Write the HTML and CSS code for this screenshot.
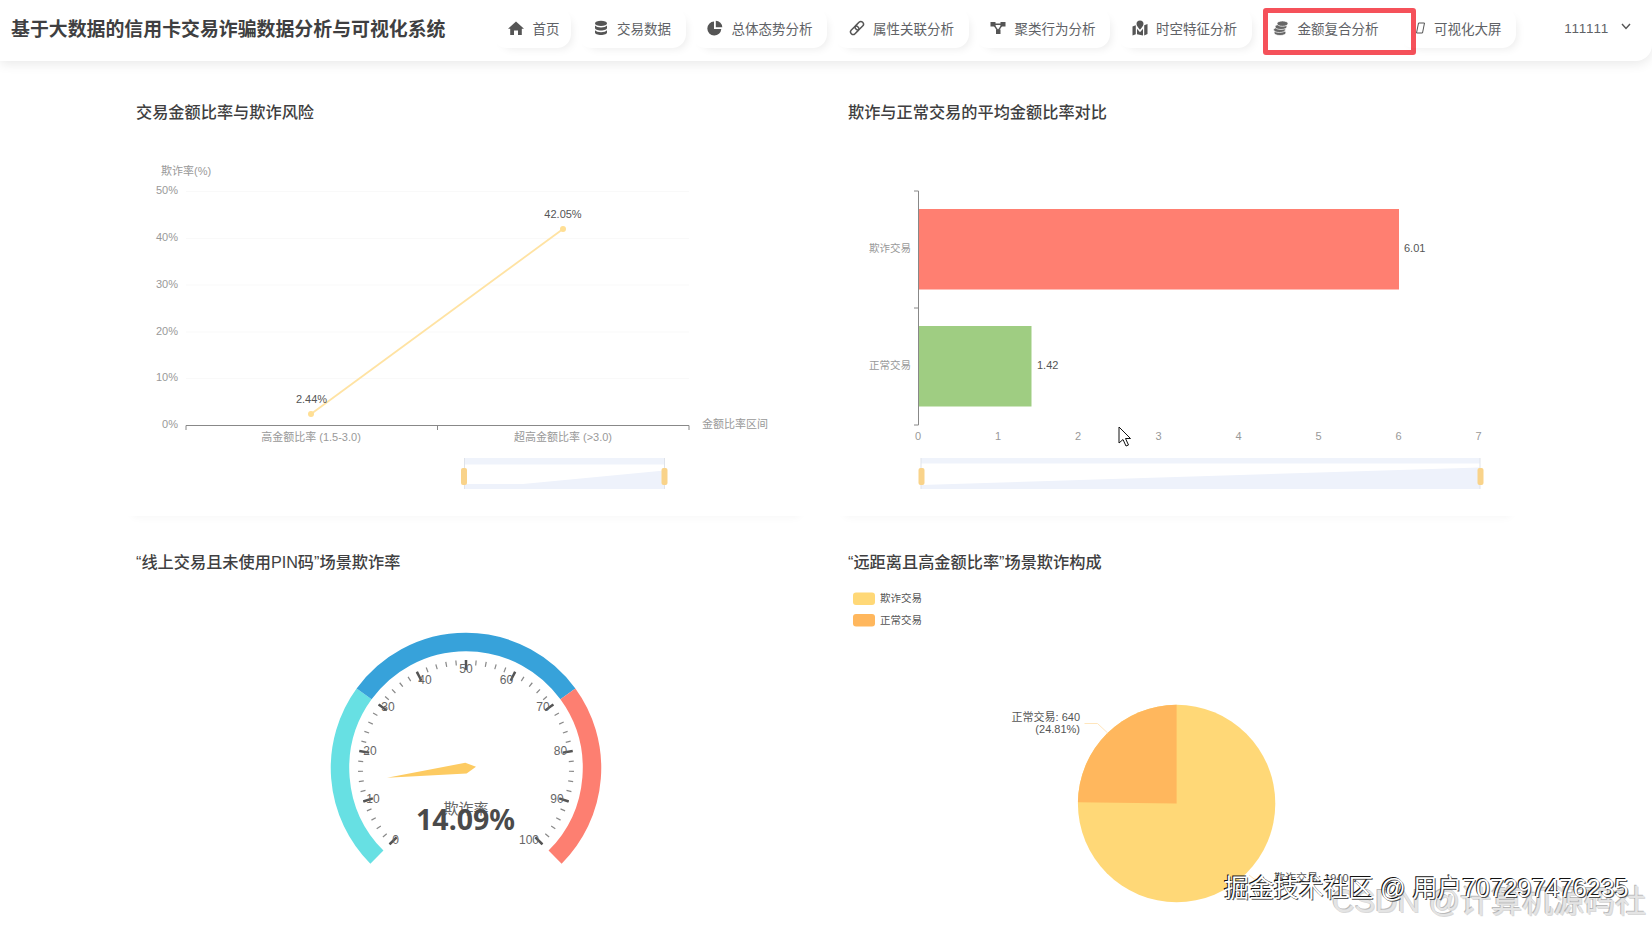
FILE: index.html
```html
<!DOCTYPE html>
<html lang="zh-CN">
<head>
    <meta charset="UTF-8">
    <title>基于大数据的信用卡交易诈骗数据分析与可视化系统</title>
    <link rel="stylesheet" href="styles.css">
</head>
<body>
    <header class="topbar">
        <div class="brand">基于大数据的信用卡交易诈骗数据分析与可视化系统</div>
        <nav class="nav">
            <a class="nav-item nav-item-home">
                <svg class="nav-icon" viewBox="0 0 16 16"><path d="M8 1.5 16 8.7h-2.2V15H10v-4.5H6V15H2.2V8.7H0z"/></svg>
                <span>首页</span>
            </a>
            <a class="nav-item">
                <svg class="nav-icon" viewBox="0 0 16 16"><ellipse cx="8" cy="3.4" rx="6" ry="2.6"/><path d="M2 5.6V8c0 1.4 2.7 2.5 6 2.5s6-1.100 6-2.500V5.600c-1 1.300-3.300 2-6 2s-5-.7-6-2z"/><path d="M2 10.200v2.400c0 1.400 2.700 2.500 6 2.500s6-1.100 6-2.500v-2.400c-1 1.300-3.300 2-6 2s-5-.7-6-2z"/></svg>
                <span>交易数据</span>
            </a>
            <a class="nav-item">
                <svg class="nav-icon" viewBox="0 0 16 16"><path d="M7 1.500A7 7 0 1 0 14.300 9H7z"/><path d="M8.800 .8V7.200H15.300A6.500 6.500 0 0 0 8.800 .8z"/></svg>
                <span>总体态势分析</span>
            </a>
            <a class="nav-item">
                <svg class="nav-icon nav-icon-line" viewBox="0 0 16 16"><g transform="rotate(-45 8 8)"><rect x="0" y="5.400" width="9.500" height="5.200" rx="2.600"/><rect x="6.500" y="5.400" width="9.500" height="5.200" rx="2.600"/></g></svg>
                <span>属性关联分析</span>
            </a>
            <a class="nav-item">
                <svg class="nav-icon" viewBox="0 0 16 16"><rect x=".5" y="2" width="5" height="4.500"/><rect x="10.500" y="2" width="5" height="4.500"/><rect x="6" y="9.500" width="4.500" height="4.500"/><path d="M3 3.500h10v1.500H3zM3.500 5.500l1.200-.8 4 6-1.200.8zM12.500 5.500l-1.200-.8-4 6 1.200.8z"/></svg>
                <span>聚类行为分析</span>
            </a>
            <a class="nav-item">
                <svg class="nav-icon" viewBox="0 0 16 16"><path d="M8 .5A3.500 3.500 0 0 0 4.500 4c0 1.800 2.300 4.400 3.500 5.700C9.200 8.400 11.500 5.800 11.500 4A3.500 3.500 0 0 0 8 .5z"/><path d="M.5 6.500 3.800 5.200V14.200L.5 15.500zM5 8.800l3 3.400 3-3.400v6.700L5 14.200zM12.200 5.200 15.500 4v10l-3.300 1.500z"/></svg>
                <span>时空特征分析</span>
            </a>
            <a class="nav-item nav-item-active">
                <svg class="nav-icon nav-icon-coins" viewBox="0 0 16 16"><ellipse cx="7" cy="12.800" rx="6" ry="2.700"/><ellipse cx="6.500" cy="9.800" rx="6" ry="2.700"/><ellipse cx="8" cy="6.800" rx="6" ry="2.700"/><ellipse cx="9.500" cy="3.600" rx="5.500" ry="2.700"/></svg>
                <span>金额复合分析</span>
                <i class="highlight-box"></i>
            </a>
            <a class="nav-item">
                <svg class="nav-icon nav-icon-line nav-icon-narrow" viewBox="0 0 11 16"><path d="M3.500 3h6l-2 10h-6z"/></svg>
                <span>可视化大屏</span>
            </a>
        </nav>
        <div class="user">
            <span>111111</span>
            <svg class="chevron" viewBox="0 0 10 7"><path d="M1 1l4 4.500L9 1"/></svg>
        </div>
    </header>

    <main class="dashboard">
        <section class="card">
            <h2 class="card-title">交易金额比率与欺诈风险</h2>
            <svg class="chart chart-left" viewBox="126 130 680 375">
                <!-- grid -->
                <path class="grid" d="M186 191.500H689M186 238.500H689M186 285H689M186 332H689M186 378.500H689"/>
                <text class="axis-label" x="161" y="171">欺诈率(%)</text>
                <text class="axis-label end" x="178" y="190">50%</text>
                <text class="axis-label end" x="178" y="236.500">40%</text>
                <text class="axis-label end" x="178" y="283.500">30%</text>
                <text class="axis-label end" x="178" y="330.500">20%</text>
                <text class="axis-label end" x="178" y="377">10%</text>
                <text class="axis-label end" x="178" y="424">0%</text>
                <path class="axis" d="M186 425.500H689M186 425.500v4.500M437.500 425.500v4.500M689 425.500v4.500"/>
                <text class="axis-label mid" x="311" y="436.500">高金额比率 (1.5-3.0)</text>
                <text class="axis-label mid" x="563" y="436.500">超高金额比率 (&gt;3.0)</text>
                <text class="axis-label" x="702" y="424">金额比率区间</text>
                <!-- line -->
                <path class="series-line" d="M311 414 563 229"/>
                <circle class="series-dot" cx="311" cy="414" r="3"/>
                <circle class="series-dot" cx="563" cy="229" r="3"/>
                <text class="value-label mid" x="311.500" y="399">2.44%</text>
                <text class="value-label mid" x="563" y="214">42.05%</text>
                <!-- data zoom -->
                <rect class="zoom-band" x="464.500" y="458" width="200" height="6.500"/>
                <path class="zoom-area" d="M464.500 484 523 484 664.500 470.500V489H464.500z"/>
                <path class="zoom-edge" d="M464.500 458V489M664.500 458V489"/>
                <rect class="zoom-handle" x="461" y="468" width="6" height="17" rx="2"/>
                <rect class="zoom-handle" x="661.500" y="468" width="6" height="17" rx="2"/>
            </svg>
        </section>

        <section class="card">
            <h2 class="card-title">欺诈与正常交易的平均金额比率对比</h2>
            <svg class="chart chart-right" viewBox="838 130 679 375">
                <path class="axis" d="M918.500 191V425M914 191h4.500M914 308h4.500M914 425h4.500"/>
                <rect class="bar-fraud" x="919" y="209" width="480" height="80.500"/>
                <rect class="bar-normal" x="919" y="326" width="112.500" height="80.500"/>
                <text class="axis-label small end" x="911" y="248">欺诈交易</text>
                <text class="axis-label small end" x="911" y="365">正常交易</text>
                <text class="value-label" x="1404" y="248">6.01</text>
                <text class="value-label" x="1037" y="365">1.42</text>
                <text class="axis-label mid" x="918" y="436">0</text>
                <text class="axis-label mid" x="998" y="436">1</text>
                <text class="axis-label mid" x="1078" y="436">2</text>
                <text class="axis-label mid" x="1158.500" y="436">3</text>
                <text class="axis-label mid" x="1238.500" y="436">4</text>
                <text class="axis-label mid" x="1318.500" y="436">5</text>
                <text class="axis-label mid" x="1398.500" y="436">6</text>
                <text class="axis-label mid" x="1478.500" y="436">7</text>
                <rect class="zoom-band" x="921" y="458" width="559" height="5.500"/>
                <path class="zoom-area" d="M921 485 1480 467.500V489H921z"/>
                <path class="zoom-edge" d="M921 458V489M1480 458V489"/>
                <rect class="zoom-handle" x="918.500" y="468" width="6" height="17" rx="2"/>
                <rect class="zoom-handle" x="1477.500" y="468" width="6" height="17" rx="2"/>
                <!-- mouse pointer caught in the screenshot -->
                <path class="pointer" d="M1119 427V443L1123 439.500 1126 446 1128.500 445 1125.500 438.500H1130.500z"/>
            </svg>
        </section>

        <section class="card">
            <h2 class="card-title">“线上交易且未使用PIN码”场景欺诈率</h2>
            <svg class="chart chart-left" viewBox="126 580 680 375">
                <path class="gauge-arc arc-low" d="M376.900 857.100A126 126 0 0 1 364.100 693.900"/>
                <path class="gauge-arc arc-mid" d="M364.100 693.900A126 126 0 0 1 567.900 693.900"/>
                <path class="gauge-arc arc-high" d="M567.900 693.900A126 126 0 0 1 555.100 857.100"/>
                <path class="tick-minor" pathLength="1000" d="M391.400 842.600A105.500 105.500 0 1 1 540.600 842.600"/>
                <path class="tick-major" pathLength="1000" d="M393.170 840.830A103 103 0 1 1 538.830 840.830"/>
                <path class="tick-end" d="M396.700 837.300 389.600 844.400M535.300 837.300 542.400 844.400"/>
                <text class="gauge-label" x="395.500" y="839.500">0</text>
                <text class="gauge-label" x="373" y="799">10</text>
                <text class="gauge-label" x="370" y="751">20</text>
                <text class="gauge-label" x="388" y="706.500">30</text>
                <text class="gauge-label" x="425" y="680">40</text>
                <text class="gauge-label" x="466" y="669">50</text>
                <text class="gauge-label" x="506.500" y="680">60</text>
                <text class="gauge-label" x="543" y="706.500">70</text>
                <text class="gauge-label" x="560.500" y="751">80</text>
                <text class="gauge-label" x="557" y="799">90</text>
                <text class="gauge-label" x="529" y="839.500">100</text>
                <path class="needle" d="M387 777.700 465.300 762.700 476 766.800 466.600 773.500z"/>
                <text class="gauge-title" x="466" y="808">欺诈率</text>
                <text class="gauge-value" x="465.500" y="818.500">14.09%</text>
            </svg>
        </section>

        <section class="card">
            <h2 class="card-title">“远距离且高金额比率”场景欺诈构成</h2>
            <svg class="chart chart-right" viewBox="838 580 679 375">
                <rect class="pie-fraud" x="853" y="592.500" width="22" height="12.500" rx="3"/>
                <rect class="pie-normal" x="853" y="614" width="22" height="12.500" rx="3"/>
                <text class="value-label small" x="880" y="597.500">欺诈交易</text>
                <text class="value-label small" x="880" y="619.500">正常交易</text>
                <circle class="pie-fraud" cx="1176.600" cy="803.500" r="98.700"/>
                <path class="pie-normal" d="M1176.600 803.500V704.800A98.700 98.700 0 0 0 1077.900 802.300z"/>
                <path class="pie-leader" d="M1084.500 723.500H1097.500L1107.700 733"/>
                <path class="pie-leader" d="M1249 875 1254 879H1262"/>
                <text class="value-label end" x="1080" y="717">正常交易: 640</text>
                <text class="value-label end" x="1080" y="728.500">(24.81%)</text>
                <text class="value-label" x="1274" y="878">欺诈交易: 1940</text>
            </svg>
        </section>
    </main>

    <div class="mark mark-csdn">CSDN @计算机源码社</div>
    <div class="mark mark-juejin">掘金技术社区 @ 用户707297476235</div>
</body>
</html>
```

FILE: styles.css
```css
html, body {
    height: 100%;
}
body {
    margin: 0;
    position: relative;
    overflow: hidden;
    background: #fff;
    color: #303133;
    font-family: "Liberation Sans", "Noto Sans CJK SC", sans-serif;
}

/* top bar */
.topbar {
    display: flex;
    height: 61px;
    padding-right: 21px;
    background: #fff;
    border-bottom-right-radius: 16px;
    box-shadow: 0 3px 12px rgba(0,0,0,0.09);
}
.brand {
    margin-left: 11px;
    font-size: 18.9px;
    font-weight: 700;
    line-height: 60px;
    color: #3f3f41;
    white-space: nowrap;
}
.nav {
    display: flex;
    gap: 6.5px;
    margin-left: 48px;
    padding-top: 8px;
}
.nav-item {
    position: relative;
    display: flex;
    align-items: center;
    height: 40px;
    padding: 0 15px;
    box-sizing: border-box;
    border-radius: 14px;
    box-shadow: 5px 5px 8px -4px rgba(0,0,0,0.08);
    font-size: 13.5px;
    color: #606266;
    white-space: nowrap;
}
.nav-item-home {
    padding-right: 12px;
}
.nav-item-active {
    box-shadow: none;
}
.nav-icon {
    flex: none;
    width: 16px;
    height: 16px;
    margin-right: 8px;
    fill: #555;
}
.nav-icon-line {
    fill: none;
    stroke: #555;
    stroke-width: 1.5;
}
.nav-icon-coins {
    fill: #666;
    stroke: #fff;
    stroke-width: .7;
}
.nav-icon-narrow {
    width: 11px;
    stroke-width: 1;
}
.highlight-box {
    position: absolute;
    top: 0;
    left: 4.5px;
    width: 153px;
    height: 47px;
    box-sizing: border-box;
    border: 5px solid #f5515a;
    border-radius: 3px;
}
.user {
    display: flex;
    align-items: center;
    gap: 12px;
    height: 56px;
    margin-left: auto;
    font-size: 13.5px;
    letter-spacing: .8px;
    color: #606266;
}
.chevron {
    width: 10px;
    height: 7px;
    margin-bottom: 4px;
    fill: none;
    stroke: #555;
    stroke-width: 1.4;
}

/* cards */
.dashboard {
    display: grid;
    grid-template-columns: 680px 679px;
    grid-auto-rows: 430px;
    column-gap: 32px;
    row-gap: 20px;
    padding: 25px 0 0 126px;
}
.card {
    box-sizing: border-box;
    padding: 15px 10px 0;
    background: #fff;
    box-shadow: 0 7px 9px -7px rgba(0,0,0,0.05);
}
.card-title {
    margin: 0 0 7px;
    font-size: 16.2px;
    font-weight: 500;
    line-height: 22px;
    color: #3f3f41;
}
.chart {
    display: block;
    height: 375px;
    margin-left: -10px;
}
.chart-left {
    width: 680px;
}
.chart-right {
    width: 679px;
}

/* chart pieces */
.chart text {
    dominant-baseline: central;
}
.chart .end {
    text-anchor: end;
}
.chart .mid {
    text-anchor: middle;
}
.axis-label {
    font-size: 11px;
    fill: #999;
}
.value-label {
    font-size: 11px;
    fill: #555;
}
.chart .small {
    font-size: 10.5px;
}
.grid {
    fill: none;
    stroke: #f9f9f9;
}
.axis {
    fill: none;
    stroke: #888;
}
.series-line {
    fill: none;
    stroke: #ffe3a3;
    stroke-width: 1.8;
}
.series-dot {
    fill: #ffdf94;
}
.bar-fraud {
    fill: #ff7f71;
}
.bar-normal {
    fill: #9fcd82;
}
.zoom-band {
    fill: #eff3fb;
}
.zoom-area {
    fill: #eef2fb;
}
.zoom-edge {
    fill: none;
    stroke: #dfe3ea;
}
.zoom-handle {
    fill: #f9d38a;
}
.pointer {
    fill: #fff;
    stroke: #111;
    stroke-width: 1;
}

/* gauge */
.gauge-arc {
    fill: none;
    stroke-width: 18.5;
}
.arc-low {
    stroke: #67e0e3;
}
.arc-mid {
    stroke: #37a2da;
}
.arc-high {
    stroke: #fd7f71;
}
.tick-minor {
    fill: none;
    stroke: #8a8a8a;
    stroke-width: 5;
    stroke-dasharray: 2.5 17.5;
    stroke-dashoffset: 1.25;
}
.tick-major {
    fill: none;
    stroke: #555;
    stroke-width: 10;
    stroke-dasharray: 5 95;
    stroke-dashoffset: 2.5;
}
.tick-end {
    fill: none;
    stroke: #555;
    stroke-width: 2.4;
}
.gauge-label {
    font-size: 12px;
    text-anchor: middle;
    fill: #666;
}
.needle {
    fill: #fdcb62;
}
.gauge-title {
    font-size: 15px;
    text-anchor: middle;
    fill: #666;
}
.gauge-value {
    font-family: "Noto Sans", "Liberation Sans", sans-serif;
    font-size: 28.5px;
    font-weight: 700;
    text-anchor: middle;
    fill: #4a4a4a;
}

/* pie */
.pie-fraud {
    fill: #ffd877;
}
.pie-normal {
    fill: #ffb75d;
}
.pie-leader {
    fill: none;
    stroke: #ffe6bd;
}

/* screenshot watermarks */
.mark {
    position: absolute;
    white-space: nowrap;
}
.mark-csdn {
    left: 1332px;
    top: 882px;
    font-size: 31px;
    line-height: 40px;
    color: #e4e4e4;
    text-shadow: -1px -1px 0 rgba(140,140,140,0.6), 1px 1px 0 rgba(180,180,180,0.5);
}
.mark-juejin {
    left: 1224px;
    top: 872px;
    font-size: 24.9px;
    line-height: 32px;
    color: #fff;
    text-shadow: -1px -1px 0 #111, 1px 1px 0 #555;
}
```
